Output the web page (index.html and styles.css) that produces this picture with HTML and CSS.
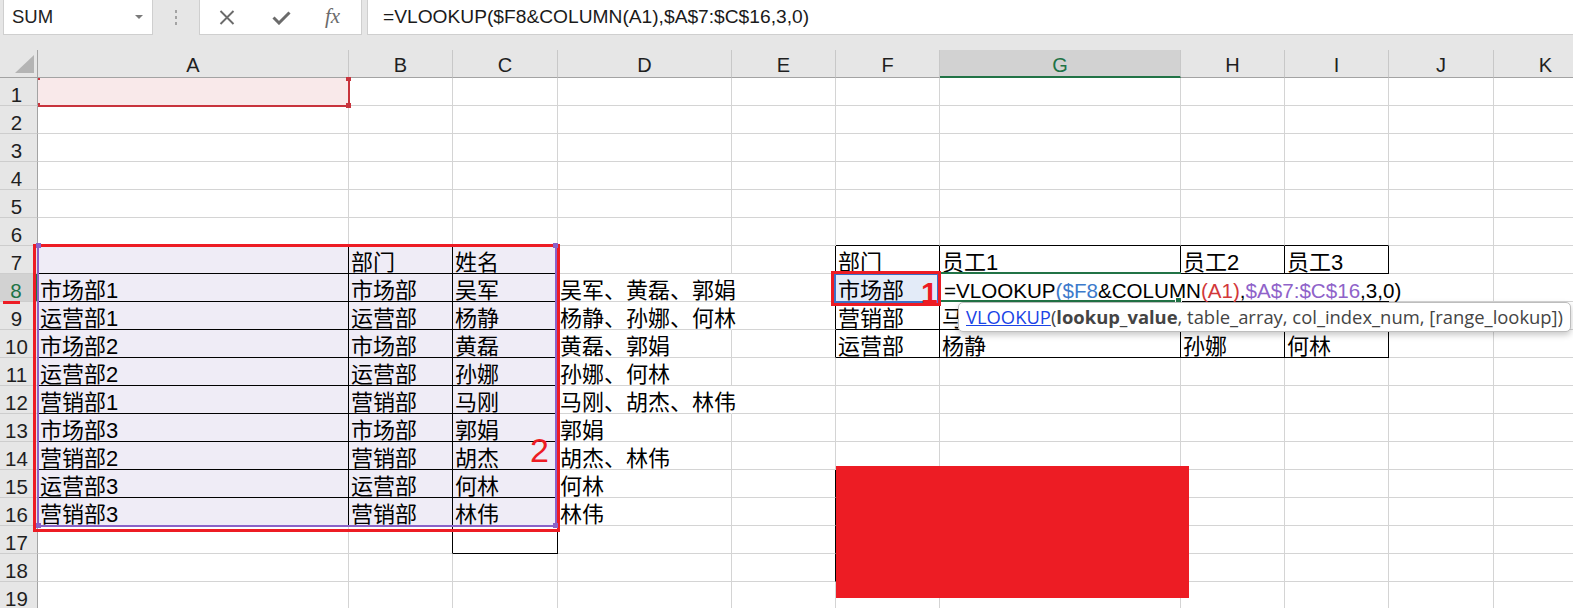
FILE: index.html
```html
<!DOCTYPE html>
<html lang="zh-CN">
<head>
<meta charset="utf-8">
<title>Excel VLOOKUP</title>
<link rel="stylesheet" href="styles.css">
</head>
<body>
<div class="topbar">
  <div class="namebox"><span class="nb-text">SUM</span><span class="nb-arrow"></span></div>
  <div class="grip"><span class="dots"></span></div>
  <div class="fnbox">
    <svg class="ic-x" width="16" height="15" viewBox="0 0 16 15"><path d="M1.5 1 L14.5 14 M14.5 1 L1.5 14" stroke="#6b6b6b" stroke-width="1.9" fill="none"/></svg>
    <svg class="ic-ok" width="19" height="14" viewBox="0 0 19 14"><path d="M1.5 6.5 L7 12 L17.5 1.5" stroke="#6b6b6b" stroke-width="3" fill="none"/></svg>
    <span class="ic-fx">fx</span>
  </div>
  <div class="fbox">=VLOOKUP($F8&amp;COLUMN(A1),$A$7:$C$16,3,0)</div>
</div>

<div class="sheet">
  <div class="corner"></div><div class="ch">A</div><div class="ch">B</div><div class="ch">C</div><div class="ch">D</div><div class="ch">E</div><div class="ch">F</div><div class="ch selc">G</div><div class="ch">H</div><div class="ch">I</div><div class="ch">J</div><div class="ch">K</div>

  <div class="rh">1</div><div class="pk"></div><div></div><div></div><div></div><div></div><div></div><div></div><div></div><div></div><div></div><div></div>
  <div class="rh">2</div><div></div><div></div><div></div><div></div><div></div><div></div><div></div><div></div><div></div><div></div><div></div>
  <div class="rh">3</div><div></div><div></div><div></div><div></div><div></div><div></div><div></div><div></div><div></div><div></div><div></div>
  <div class="rh">4</div><div></div><div></div><div></div><div></div><div></div><div></div><div></div><div></div><div></div><div></div><div></div>
  <div class="rh">5</div><div></div><div></div><div></div><div></div><div></div><div></div><div></div><div></div><div></div><div></div><div></div>
  <div class="rh">6</div><div></div><div></div><div></div><div></div><div></div><div class="bkb"></div><div class="bkb"></div><div class="bkb"></div><div class="bkb"></div><div></div><div></div>
  <div class="rh">7</div><div class="lv bk"></div><div class="lv bk">部门</div><div class="lv bk">姓名</div><div></div><div class="bkr"></div><div class="bk">部门</div><div class="bk">员工1</div><div class="bk">员工2</div><div class="bk">员工3</div><div></div><div></div>
  <div class="rh selr">8</div><div class="lv bk">市场部1</div><div class="lv bk">市场部</div><div class="lv bk">吴军</div><div class="nr">吴军、黄磊、郭娟</div><div class="bkr"></div><div class="bk bl">市场部</div><div class="bk"></div><div class="bk"></div><div class="bk"></div><div></div><div></div>
  <div class="rh">9</div><div class="lv bk">运营部1</div><div class="lv bk">运营部</div><div class="lv bk">杨静</div><div class="nr">杨静、孙娜、何林</div><div class="bkr"></div><div class="bk">营销部</div><div class="bk"><span class="clip">马刚</span></div><div class="bk"></div><div class="bk"></div><div></div><div></div>
  <div class="rh">10</div><div class="lv bk">市场部2</div><div class="lv bk">市场部</div><div class="lv bk">黄磊</div><div>黄磊、郭娟</div><div class="bkr"></div><div class="bk">运营部</div><div class="bk">杨静</div><div class="bk">孙娜</div><div class="bk">何林</div><div></div><div></div>
  <div class="rh">11</div><div class="lv bk">运营部2</div><div class="lv bk">运营部</div><div class="lv bk">孙娜</div><div>孙娜、何林</div><div></div><div></div><div></div><div></div><div></div><div></div><div></div>
  <div class="rh">12</div><div class="lv bk">营销部1</div><div class="lv bk">营销部</div><div class="lv bk">马刚</div><div class="nr">马刚、胡杰、林伟</div><div></div><div></div><div></div><div></div><div></div><div></div><div></div>
  <div class="rh">13</div><div class="lv bk">市场部3</div><div class="lv bk">市场部</div><div class="lv bk">郭娟</div><div>郭娟</div><div></div><div></div><div></div><div></div><div></div><div></div><div></div>
  <div class="rh">14</div><div class="lv bk">营销部2</div><div class="lv bk">营销部</div><div class="lv bk">胡杰</div><div>胡杰、林伟</div><div></div><div></div><div></div><div></div><div></div><div></div><div></div>
  <div class="rh">15</div><div class="lv bk">运营部3</div><div class="lv bk">运营部</div><div class="lv bk">何林</div><div>何林</div><div class="bkr"></div><div></div><div></div><div></div><div></div><div></div><div></div>
  <div class="rh">16</div><div class="lv bk">营销部3</div><div class="lv bk">营销部</div><div class="lv bk">林伟</div><div>林伟</div><div class="bkr"></div><div></div><div></div><div></div><div></div><div></div><div></div>
  <div class="rh">17</div><div></div><div class="bkr"></div><div class="bk"></div><div></div><div class="bkr"></div><div></div><div></div><div></div><div></div><div></div><div></div>
  <div class="rh">18</div><div></div><div></div><div></div><div></div><div class="bkr"></div><div></div><div></div><div></div><div></div><div></div><div></div>
  <div class="rh">19</div><div></div><div></div><div></div><div></div><div></div><div></div><div></div><div></div><div></div><div></div><div></div>
</div>

<!-- in-cell editor overlaying G8:I8 -->
<div class="editor">=VLOOKUP<span class="c-blue">($F8</span>&amp;COLUMN<span class="c-red">(A1)</span>,<span class="c-purple">$A$7:$C$16</span>,3,0)</div>
<div class="active"></div>
<div class="fill-handle"></div>

<!-- formula range highlights -->
<div class="ref-a1"><i class="h tl"></i><i class="h tr"></i><i class="h bl"></i><i class="h br"></i></div>
<div class="ref-f8"></div>
<div class="ref-range"></div>

<!-- annotations -->
<div class="mark mark-range"></div>
<div class="mark mark-f8"></div>
<div class="ref-range-handles"><i class="h tl"></i><i class="h tr"></i><i class="h bl"></i><i class="h br"></i></div>
<div class="label label-1">1</div>
<div class="label label-2">2</div>
<div class="row-mark"></div>
<div class="redact"></div>

<div class="tooltip"><span class="tt-fn">VLOOKUP</span>(<b>lookup_value</b>, table_array, col_index_num, [range_lookup])</div>
</body>
</html>
```

FILE: styles.css
```css
html, body {
  margin: 0;
  padding: 0;
}
body {
  width: 1573px;
  height: 608px;
  overflow: hidden;
  position: relative;
  background: #ffffff;
  font-family: "Liberation Sans", "Noto Sans CJK SC", sans-serif;
  color: #000;
}

/* ---------- formula bar ---------- */
.topbar {
  height: 50px;
  background: #e6e6e6;
  display: flex;
  align-items: flex-start;
}
.namebox {
  margin-left: 3px;
  width: 150px;
  height: 35px;
  box-sizing: border-box;
  background: #fff;
  border: 1px solid #cfcfcf;
  border-top: none;
  display: flex;
  align-items: center;
  padding-left: 8px;
  font-size: 18.5px;
  color: #222;
}
.nb-arrow {
  margin-left: auto;
  margin-right: 9px;
  width: 0;
  height: 0;
  border-left: 4px solid transparent;
  border-right: 4px solid transparent;
  border-top: 4px solid #7a7a7a;
}
.grip {
  width: 46px;
  height: 35px;
  display: flex;
  align-items: center;
  justify-content: center;
}
.dots {
  width: 2px;
  height: 15px;
  margin-left: -1px;
  background: repeating-linear-gradient(#a3a3a3 0 3px, transparent 3px 6px);
}
.fnbox {
  width: 163px;
  height: 35px;
  box-sizing: border-box;
  background: #fff;
  border: 1px solid #cfcfcf;
  border-top: none;
  display: flex;
  align-items: center;
}
.ic-x { margin-left: 19px; }
.ic-ok { margin-left: 37px; margin-top: 1px; }
.ic-fx {
  margin-left: 34px;
  font-family: "Liberation Serif", serif;
  font-style: italic;
  font-size: 21px;
  color: #6b6b6b;
  margin-top: -2px;
}
.fbox {
  flex: 1;
  margin-left: 5px;
  height: 35px;
  box-sizing: border-box;
  background: #fff;
  border: 1px solid #cfcfcf;
  border-top: none;
  border-right: none;
  padding-left: 15px;
  font-size: 19.2px;
  line-height: 33px;
  color: #1a1a1a;
  white-space: nowrap;
}

/* ---------- sheet grid ---------- */
.sheet {
  display: grid;
  grid-template-columns: 38px 311px 104px 105px 174px 104px 104px 241px 104px 104px 105px 104px;
  grid-auto-rows: 28px;
  width: 1598px;
}
.sheet > div {
  box-sizing: border-box;
  border-right: 1px solid #d4d4d4;
  border-bottom: 1px solid #d4d4d4;
  font-size: 22px;
  line-height: 27px;
  padding: 3px 0 0 2px;
  white-space: nowrap;
  overflow: visible;
}
.clip {
  display: inline-block;
  width: 16px;
  overflow: hidden;
  vertical-align: top;
}
.sheet > .corner {
  background: #e6e6e6;
  border-right: 1px solid #a3a3a3;
  border-bottom: 1px solid #a3a3a3;
  position: relative;
}
.corner::after {
  content: "";
  position: absolute;
  right: 3px;
  bottom: 4px;
  width: 19px;
  height: 18px;
  background: #b4b4b4;
  clip-path: polygon(100% 0, 100% 100%, 0 100%);
}
.sheet > .ch {
  background: #e6e6e6;
  border-right: 1px solid #c8c8c8;
  border-bottom: 1px solid #a3a3a3;
  text-align: center;
  font-size: 20px;
  padding: 2px 0 0 0;
  color: #1f1f1f;
}
.sheet > .ch.selc {
  background: #d2d2d2;
  color: #217346;
  border-bottom: 2px solid #217346;
}
.sheet > .rh {
  background: #e6e6e6;
  border-right: 1px solid #a3a3a3;
  border-bottom: 1px solid #cdcdcd;
  text-align: center;
  font-size: 20.5px;
  padding: 3px 4px 0 0;
  color: #1f1f1f;
}
.sheet > .rh.selr {
  background: #d2d2d2;
  color: #217346;
  border-right: 2px solid #217346;
}

.sheet > .pk { background: #f9e9ea; }
.sheet > .lv { background: #efecf6; }
.sheet > .bl { background: #e3ebf8; }
.sheet > .bk { border-right-color: #000; border-bottom-color: #000; }
.sheet > .bkr { border-right-color: #000; }
.sheet > .bkb { border-bottom-color: #000; }
.sheet > .nr { border-right-color: transparent; }

/* ---------- in-cell editor ---------- */
.editor {
  position: absolute;
  left: 940px;
  top: 274px;
  width: 466px;
  height: 27px;
  box-sizing: border-box;
  background: #fff;
  padding: 3px 0 0 4px;
  font-size: 20.6px;
  line-height: 27px;
  white-space: nowrap;
  color: #000;
}
.c-blue { color: #3d7acb; }
.c-red { color: #d2383a; }
.c-purple { color: #8f63c9; }
.active {
  position: absolute;
  left: 939px;
  top: 272px;
  width: 242px;
  height: 30px;
  box-sizing: border-box;
  border: 2px solid #217346;
  border-right: none;
}
.fill-handle {
  position: absolute;
  left: 1175px;
  top: 297px;
  width: 5px;
  height: 5px;
  background: #217346;
  border: 1px solid #fff;
}

/* ---------- range highlights ---------- */
.ref-a1 {
  position: absolute;
  left: 38px;
  top: 78px;
  width: 312px;
  height: 29px;
  box-sizing: border-box;
  border-right: 2px solid #c8343d;
  border-bottom: 2px solid #c8343d;
}
.ref-a1 .h, .ref-range-handles .h {
  position: absolute;
  width: 5px;
  height: 5px;
  background: #c8343d;
}
.ref-a1 .tl { left: 0; top: 0; width: 2px; height: 2px; }
.ref-a1 .tr { right: -3px; top: -1px; height: 4px; }
.ref-a1 .bl { left: 0; bottom: -2px; width: 2px; height: 4px; }
.ref-a1 .br { right: -3px; bottom: -3px; }

.ref-f8 {
  position: absolute;
  left: 834px;
  top: 273px;
  width: 105px;
  height: 30px;
  box-sizing: border-box;
  border: 2px solid #3d6fc6;
}
.ref-range {
  position: absolute;
  left: 37px;
  top: 245px;
  width: 520px;
  height: 282px;
  box-sizing: border-box;
  border: 2px solid #8a63c8;
}
.ref-range-handles {
  position: absolute;
  left: 37px;
  top: 245px;
  width: 520px;
  height: 282px;
}
.ref-range-handles .h { background: #8a63c8; }
.ref-range-handles .tl { left: -1px; top: -2px; }
.ref-range-handles .tr { right: -1px; top: -2px; }
.ref-range-handles .bl { left: -1px; bottom: -1px; }
.ref-range-handles .br { right: -1px; bottom: -1px; }

/* ---------- annotations ---------- */
.mark {
  position: absolute;
  box-sizing: border-box;
  border: 3px solid #ed1c24;
}
.mark-range { left: 33px; top: 244px; width: 527px; height: 288px; }
.mark-f8 { left: 831px; top: 271px; width: 110px; height: 35px; }
.label {
  position: absolute;
  color: #ed1c24;
  line-height: 1;
  font-family: "Liberation Sans", sans-serif;
}
.label-1 { left: 921px; top: 278px; font-size: 30px; font-weight: bold; }
.label-2 { left: 530px; top: 433px; font-size: 34px; }
.row-mark {
  position: absolute;
  left: 3px;
  top: 301px;
  width: 17px;
  height: 3px;
  background: #ed1c24;
}
.redact {
  position: absolute;
  left: 836px;
  top: 466px;
  width: 353px;
  height: 132px;
  background: #ed1c24;
}

/* ---------- function tooltip ---------- */
.tooltip {
  position: absolute;
  left: 958px;
  top: 302px;
  width: 613px;
  height: 30px;
  box-sizing: border-box;
  border: 1px solid #bdbdbd;
  border-radius: 5px;
  background: #fff;
  box-shadow: 0 3px 6px rgba(0, 0, 0, 0.22);
  padding-left: 7px;
  font-family: "Open Sans", sans-serif;
  font-size: 18.4px;
  line-height: 27px;
  color: #444;
  white-space: nowrap;
}
.tooltip b { font-weight: bold; }
.tt-fn {
  color: #1a44e6;
  text-decoration: underline;
}
```
